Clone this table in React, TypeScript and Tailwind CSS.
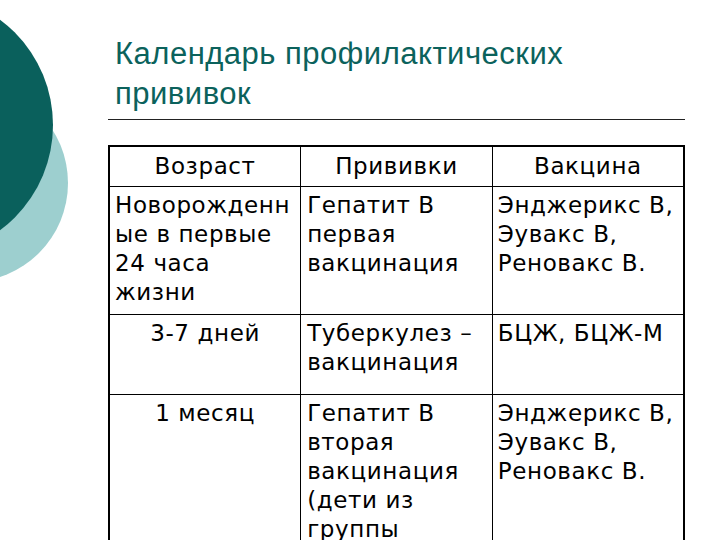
import React from "react";

const rows = [
  {
    age: ["Новорожденн", "ые в первые", "24 часа", "жизни"],
    ageCenter: false,
    shot: ["Гепатит В", "первая", "вакцинация"],
    vaccine: ["Энджерикс В,", "Эувакс В,", "Реновакс В."],
    h: "h-[128px]",
  },
  {
    age: ["3-7 дней"],
    ageCenter: true,
    shot: ["Туберкулез –", "вакцинация"],
    vaccine: ["БЦЖ, БЦЖ-М"],
    h: "h-[80px]",
  },
  {
    age: ["1 месяц"],
    ageCenter: true,
    shot: ["Гепатит В", "вторая", "вакцинация", "(дети из", "группы", "риска)"],
    vaccine: ["Энджерикс В,", "Эувакс В,", "Реновакс В."],
    h: "h-[200px]",
  },
];

export default function App() {
  return (
    <div className="relative w-[720px] h-[540px] overflow-hidden bg-white">
      {/* декоративные круги слева */}
      <svg className="absolute left-0 top-0" width="120" height="300" viewBox="0 0 120 300">
        <circle cx="-31" cy="183" r="99" fill="#9dcfcf" />
        <circle cx="-78" cy="125" r="131" fill="#0a605c" />
      </svg>

      <div className="pl-[108px] pr-[35px] pt-[34px]">
        <h1
          className="pl-[7px] text-[31px] leading-[40px] tracking-[0.5px] text-[#0b625c] font-normal"
          style={{ fontFamily: '"Liberation Sans", Arial, sans-serif' }}
        >
          Календарь профилактических
          <br />
          прививок
        </h1>
        <div className="mt-[5px] h-px bg-[#222]" />

        <table
          className="mt-[25px] w-[577px] table-fixed border-collapse border-2 border-black text-[23px] leading-[29px] tracking-[0.6px] text-black"
          style={{ fontFamily: '"DejaVu Sans", Verdana, sans-serif' }}
        >
          <thead>
            <tr className="h-[40px]">
              <th className="border border-black font-normal text-center align-middle">Возраст</th>
              <th className="border border-black font-normal text-center align-middle">Прививки</th>
              <th className="border border-black font-normal text-center align-middle">Вакцина</th>
            </tr>
          </thead>
          <tbody>
            {rows.map((r, i) => (
              <tr key={i} className={r.h}>
                <td
                  className={
                    "border border-black align-top px-[5px] pt-[4px] whitespace-nowrap " +
                    (r.ageCenter ? "text-center" : "text-left")
                  }
                >
                  {r.age.map((s, j) => (
                    <div key={j}>{s}</div>
                  ))}
                </td>
                <td className="border border-black align-top px-[6px] pt-[4px] whitespace-nowrap">
                  {r.shot.map((s, j) => (
                    <div key={j}>{s}</div>
                  ))}
                </td>
                <td className="border border-black align-top px-[5px] pt-[4px] whitespace-nowrap">
                  {r.vaccine.map((s, j) => (
                    <div key={j}>{s}</div>
                  ))}
                </td>
              </tr>
            ))}
          </tbody>
        </table>
      </div>
    </div>
  );
}
